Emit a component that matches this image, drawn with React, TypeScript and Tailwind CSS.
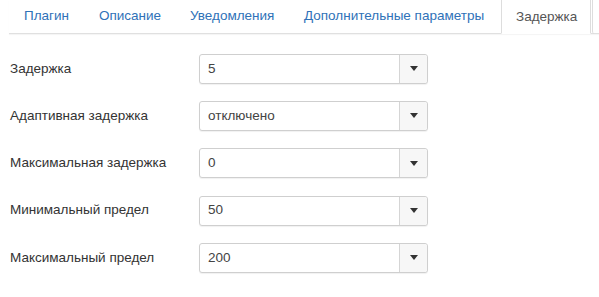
const TABS = [
  { label: 'Плагин', width: 'w-[75px]' },
  { label: 'Описание', width: 'w-[91px]' },
  { label: 'Уведомления', width: 'w-[114px]' },
  { label: 'Дополнительные параметры', width: 'w-[212px]' },
]

const FIELDS = [
  { label: 'Задержка', value: '5' },
  { label: 'Адаптивная задержка', value: 'отключено' },
  { label: 'Максимальная задержка', value: '0' },
  { label: 'Минимальный предел', value: '50' },
  { label: 'Максимальный предел', value: '200' },
]

function Select({ value }: { value: string }) {
  return (
    <div className="flex h-[30px] w-[229px] rounded-[3px] border border-[#cfcfcf] bg-white shadow-[0_1px_1px_rgba(0,0,0,0.06)]">
      <div className="flex flex-1 items-center pl-[8px] text-[#444]">{value}</div>
      <div className="flex w-[28px] items-center justify-center rounded-r-[3px] border-l border-[#d5d5d5] bg-[#f7f7f7]">
        <svg width="8" height="5" viewBox="0 0 8 5" aria-hidden="true">
          <path d="M0 0h8L4 5z" fill="#333" />
        </svg>
      </div>
    </div>
  )
}

export default function App() {
  return (
    <div className="h-[297px] w-[599px] overflow-hidden bg-white font-['Liberation_Sans',Arial,sans-serif] text-[13.5px]">
      {/* Tabs */}
      <div className="ml-[9px] flex h-[34px] items-stretch border-b border-[#e0e0e0] shadow-[0_1px_1px_rgba(0,0,0,0.04)]">
        {TABS.map((tab) => (
          <div
            key={tab.label}
            className={`flex shrink-0 items-center whitespace-nowrap px-[15px] text-[#2f72b8] ${tab.width}`}
          >
            {tab.label}
          </div>
        ))}
        <div className="-mb-px -mt-[4px] flex w-[90px] shrink-0 items-center whitespace-nowrap border border-[#ddd] border-b-white bg-white px-[14px] pt-[4px] text-[#555]">
          Задержка
        </div>
        <div className="-mb-px ml-[1px] flex-1 rounded-bl-[3px] border-l border-[#ddd]" />
      </div>

      {/* Form */}
      <div className="pl-[10px] pt-[11px]">
        {FIELDS.map((f) => (
          <div key={f.label} className="flex h-[47.3px] items-center">
            <div className="w-[189px] text-[#333]">{f.label}</div>
            <Select value={f.value} />
          </div>
        ))}
      </div>
    </div>
  )
}
